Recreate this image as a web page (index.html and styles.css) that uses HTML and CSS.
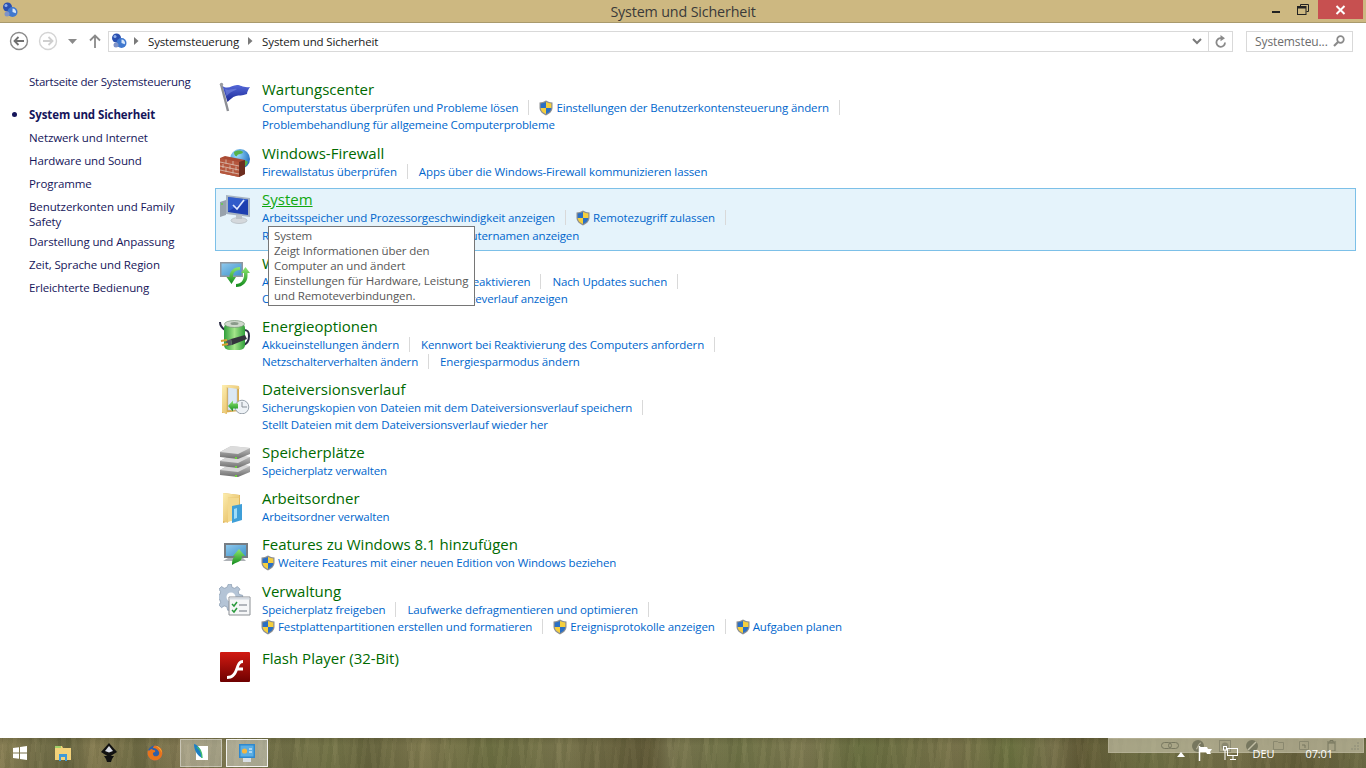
FILE: index.html
```html
<!DOCTYPE html>
<html lang="de">
<head>
<meta charset="utf-8">
<title>System und Sicherheit</title>
<link rel="stylesheet" href="styles.css">
</head>
<body>
<svg class="defs" width="0" height="0" aria-hidden="true">
  <defs>
    <linearGradient id="gBlue" x1="0" y1="0" x2="0" y2="1"><stop offset="0" stop-color="#5468d8"/><stop offset="1" stop-color="#1a2896"/></linearGradient>
    <linearGradient id="gGreen" x1="0" y1="0" x2="1" y2="0"><stop offset="0" stop-color="#2f9e3a"/><stop offset=".5" stop-color="#a4e58a"/><stop offset="1" stop-color="#2f9e3a"/></linearGradient>
    <linearGradient id="gArrow" x1="0" y1="0" x2="0" y2="1"><stop offset="0" stop-color="#8fe870"/><stop offset="1" stop-color="#118a1c"/></linearGradient>
    <linearGradient id="gFolder" x1="0" y1="0" x2="1" y2="1"><stop offset="0" stop-color="#fdeeb0"/><stop offset="1" stop-color="#dfb04f"/></linearGradient>
    <linearGradient id="gRed" x1="0" y1="0" x2="0" y2="1"><stop offset="0" stop-color="#d21a12"/><stop offset="1" stop-color="#6e0000"/></linearGradient>
    <linearGradient id="gScreen" x1="0" y1="0" x2="1" y2="1"><stop offset="0" stop-color="#8ec8ec"/><stop offset="1" stop-color="#3f93cc"/></linearGradient>
    <linearGradient id="gDisk" x1="0" y1="0" x2="0" y2="1"><stop offset="0" stop-color="#c9c9c9"/><stop offset="1" stop-color="#6e6e6e"/></linearGradient>
    <radialGradient id="gGlobe" cx=".35" cy=".3" r=".8"><stop offset="0" stop-color="#9be0ff"/><stop offset="1" stop-color="#1560b8"/></radialGradient>
    <symbol id="shield" viewBox="0 0 16 16">
      <path d="M8 .5C6 1.800 4 2.300 1.500 2.400v5.400c0 3.600 3 6.200 6.500 7.700 3.500-1.500 6.500-4.100 6.500-7.700V2.400C12 2.300 10 1.800 8 .5z" fill="#8d8f91"/>
      <path d="M8 2v6H2.700V3.400C4.800 3.300 6.400 2.900 8 2z" fill="#2a6fc4"/>
      <path d="M8 2v6h5.300V3.400C11.200 3.300 9.600 2.900 8 2z" fill="#f5cf3d"/>
      <path d="M2.700 8H8v6.100C5.300 12.900 2.800 10.800 2.700 8z" fill="#f5cf3d"/>
      <path d="M13.300 8H8v6.100c2.700-1.200 5.200-3.300 5.300-6.100z" fill="#2a6fc4"/>
    </symbol>
    <symbol id="cpl" viewBox="0 0 16 16">
      <circle cx="5.500" cy="5" r="4.500" fill="#2a4fb0"/>
      <circle cx="4" cy="3.500" r="1.500" fill="#8fb0ea"/>
      <circle cx="10.500" cy="10" r="5" fill="#3f78cf"/>
      <path d="M10.500 10V6.500a3.500 3.500 0 0 1 3.300 4.700z" fill="#d6e6fa"/>
      <circle cx="5" cy="12" r="2.500" fill="#7f93c8"/>
    </symbol>
  </defs>
</svg>

<div class="window">
  <header class="titlebar">
    <svg class="title-icon"><use href="#cpl"/></svg>
    <div class="title-text">System und Sicherheit</div>
    <div class="win-controls">
      <span class="win-min"></span>
      <svg class="win-restore" width="12" height="11" viewBox="0 0 12 11"><path d="M3.500 2.500V.5h8v7h-2" fill="none" stroke="#222"/><rect x=".5" y="2.500" width="8.500" height="8" fill="none" stroke="#222" stroke-width="1"/><rect x="1" y="3" width="8" height="1.500" fill="#222"/></svg>
      <span class="win-close"><svg width="11" height="10" viewBox="0 0 11 10"><path d="M1.500 1l8 8M9.500 1l-8 8" stroke="#fff" stroke-width="2"/></svg></span>
    </div>
  </header>

  <nav class="navbar">
    <svg class="nav-round" width="20" height="20" viewBox="0 0 20 20"><circle cx="10" cy="10" r="8.500" fill="#fff" stroke="#8a8a8a" stroke-width="1.400"/><path d="M15 10H6M9.500 6L5.500 10l4 4" fill="none" stroke="#707070" stroke-width="1.800"/></svg>
    <svg class="nav-round nav-fwd" width="20" height="20" viewBox="0 0 20 20"><circle cx="10" cy="10" r="8.500" fill="#fff" stroke="#d4d4d4" stroke-width="1.400"/><path d="M5 10h9M10.500 6l4 4-4 4" fill="none" stroke="#cfcfcf" stroke-width="1.800"/></svg>
    <svg class="nav-drop" width="9" height="5" viewBox="0 0 9 5"><path d="M0 0h9L4.500 5z" fill="#8a8a8a"/></svg>
    <svg class="nav-up" width="12" height="14" viewBox="0 0 12 14"><path d="M6 14V2M1 6.500l5-5 5 5" fill="none" stroke="#8a8a8a" stroke-width="1.800"/></svg>
    <div class="address">
      <svg class="addr-icon"><use href="#cpl"/></svg>
      <svg class="addr-arrow" width="5" height="8" viewBox="0 0 5 8"><path d="M0 0l4.500 4L0 8z" fill="#7a7a7a"/></svg>
      <span class="addr-part">Systemsteuerung</span>
      <svg class="addr-arrow" width="5" height="8" viewBox="0 0 5 8"><path d="M0 0l4.500 4L0 8z" fill="#7a7a7a"/></svg>
      <span class="addr-part">System und Sicherheit</span>
      <svg class="addr-chev" width="10" height="7" viewBox="0 0 10 7"><path d="M1 1l4 4 4-4" fill="none" stroke="#7a7a7a" stroke-width="2"/></svg>
      <span class="addr-refresh"><svg width="12" height="13" viewBox="0 0 12 13"><path d="M10 7.500A4.300 4.300 0 1 1 6 3.200" fill="none" stroke="#8a8a8a" stroke-width="1.800"/><path d="M5.500 0l4.500 3.200-4.500 3z" fill="#8a8a8a"/></svg></span>
    </div>
    <div class="search">
      <span class="search-text">Systemsteu...</span>
      <svg width="12" height="12" viewBox="0 0 12 12"><circle cx="7.500" cy="4.500" r="3.300" fill="none" stroke="#8a8a8a" stroke-width="1.700"/><path d="M5 7l-4 4" stroke="#8a8a8a" stroke-width="2.200"/></svg>
    </div>
  </nav>

  <div class="content">
    <aside class="sidebar">
      <a class="side-home">Startseite der Systemsteuerung</a>
      <a class="side-link side-active">System und Sicherheit</a>
      <a class="side-link">Netzwerk und Internet</a>
      <a class="side-link">Hardware und Sound</a>
      <a class="side-link">Programme</a>
      <a class="side-link side-wrap">Benutzerkonten und Family Safety</a>
      <a class="side-link">Darstellung und Anpassung</a>
      <a class="side-link">Zeit, Sprache und Region</a>
      <a class="side-link">Erleichterte Bedienung</a>
    </aside>

    <main class="list">
      <section class="item item-first">
        <svg class="icon" viewBox="0 0 32 32"><path d="M2 2l7 27" stroke="#8d8f95" stroke-width="2.400"/><circle cx="2.500" cy="2.500" r="1.700" fill="#9a9ca2"/><path d="M3.500 4C9 8 13 3 18 3c4 0 6 3 13 2-2 3-3 5-3 7-5 2-8 1-11 2-4 1-6 4-8.500 6z" fill="url(#gBlue)"/><path d="M6 7c4 2 8-1 12 0-3 2-7 3-10.500 7z" fill="#8292e6" opacity=".5"/></svg>
        <div class="body">
          <h2 class="title">Wartungscenter</h2>
          <div class="links"><a class="link sep">Computerstatus überprüfen und Probleme lösen</a><svg class="shield"><use href="#shield"/></svg><a class="link sep">Einstellungen der Benutzerkontensteuerung ändern</a></div>
          <div class="links"><a class="link">Problembehandlung für allgemeine Computerprobleme</a></div>
        </div>
      </section>

      <section class="item item-one item-pad">
        <svg class="icon" viewBox="0 0 32 32"><circle cx="21" cy="13" r="10" fill="url(#gGlobe)"/><path d="M15 6c3-2 7-2 9 0-1 3-5 1-6 4-2 1-3-2-3-4zM23 15c3-1 5 0 6 1-1 3-3 5-5 5-1-2-2-4-1-6z" fill="#57b24a"/><path d="M1 12l5-2 20 4v14l-6 3L1 27z" fill="#a94a33"/><path d="M1 12l19 4v15L1 27z" fill="#b5573e"/><path d="M20 16l6-2v14l-6 3z" fill="#6d2e20"/><path d="M1 16l19 4M1 20l19 4M1 24l19 4M7 13.500v4M14 15v4M4 18v4M11 19.500v4M17 20.500v4M7 22v4M14 23.500v4" stroke="#dcc3b5" stroke-width=".8" fill="none"/></svg>
        <div class="body">
          <h2 class="title">Windows-Firewall</h2>
          <div class="links"><a class="link sep">Firewallstatus überprüfen</a><a class="link">Apps über die Windows-Firewall kommunizieren lassen</a></div>
        </div>
      </section>

      <section class="item item-hover">
        <svg class="icon" viewBox="0 0 32 32"><path d="M1 9l6-2v15l-6 2z" fill="#98a2ac"/><circle cx="3" cy="11" r="1" fill="#5fd048"/><path d="M7 2l24 3v19L7 21z" fill="#a6b3c1"/><path d="M9 4l20 2.500v15.500L9 19z" fill="#1d3fb0"/><path d="M9 4l20 2.500-20 12z" fill="#3f6fdc" opacity=".6"/><path d="M14 12l4 4 7-9" fill="none" stroke="#dfe9ff" stroke-width="1.700"/><ellipse cx="20" cy="27.500" rx="8" ry="3" fill="#d4d8dc" stroke="#aab0b6" stroke-width=".6"/><path d="M17 22h6v4h-6z" fill="#b9c0c6"/></svg>
        <div class="body">
          <h2 class="title title-hover">System</h2>
          <div class="links"><a class="link sep">Arbeitsspeicher und Prozessorgeschwindigkeit anzeigen</a><svg class="shield"><use href="#shield"/></svg><a class="link sep">Remotezugriff zulassen</a></div>
          <div class="links"><a class="link sep">Remoteunterstützung starten</a><a class="link">Computernamen anzeigen</a></div>
        </div>
        <div class="tooltip">System<br>Zeigt Informationen über den<br>Computer an und ändert<br>Einstellungen für Hardware, Leistung<br>und Remoteverbindungen.</div>
      </section>

      <section class="item">
        <svg class="icon" viewBox="0 0 32 32"><path d="M1 6h23v15H1z" fill="#8f979f"/><path d="M2.500 7.500h20v12h-20z" fill="url(#gScreen)"/><path d="M17 28c5 0 8-4 8-9v-2h-3l4.500-6 4.500 6h-2.500v3c0 6-4.500 11-11.500 11z" fill="url(#gArrow)"/><path d="M21 14c-5 0-7 3-7 7h3l-4.500 7-5-7h3c0-6 4.500-10 10.500-10z" fill="url(#gArrow)"/></svg>
        <div class="body">
          <h2 class="title">Windows Update</h2>
          <div class="links"><a class="link sep">Automatische Updates aktivieren oder deaktivieren</a><a class="link sep">Nach Updates suchen</a></div>
          <div class="links"><a class="link sep">Optionale Updates installieren</a><a class="link">Updateverlauf anzeigen</a></div>
        </div>
      </section>

      <section class="item">
        <svg class="icon" viewBox="0 0 32 32"><path d="M1 3c0 4 2 6 5 8M25 11c4 0 5 2 5 6 0 5-2 8-6 9" fill="none" stroke="#2a2a44" stroke-width="2"/><rect x="5" y="4" width="21" height="27" rx="5" fill="url(#gGreen)"/><ellipse cx="15.500" cy="5" rx="10" ry="3.500" fill="#cfd8cc" stroke="#6a8a6a" stroke-width=".6"/><ellipse cx="15.500" cy="4.500" rx="4" ry="1.500" fill="#8a9a8a"/><path d="M12 20l14-4 2 4-15 6z" fill="#33343c"/><path d="M12 20l1 6-5 1-1-5z" fill="#54555e"/><path d="M2 22l6-1M3 26l6-1" stroke="#d8a035" stroke-width="2"/></svg>
        <div class="body">
          <h2 class="title">Energieoptionen</h2>
          <div class="links"><a class="link sep">Akkueinstellungen ändern</a><a class="link sep">Kennwort bei Reaktivierung des Computers anfordern</a></div>
          <div class="links"><a class="link sep">Netzschalterverhalten ändern</a><a class="link">Energiesparmodus ändern</a></div>
        </div>
      </section>

      <section class="item">
        <svg class="icon" viewBox="0 0 32 32"><path d="M3 3l17 1v25L3 31z" fill="#d9ac4f"/><path d="M3 3l5 3v26L3 30z" fill="url(#gFolder)"/><path d="M9 5l9 1v22H9z" fill="#dbe8f5" stroke="#a9bfd6" stroke-width=".5"/><path d="M3 3c5 0 10 0 17 1l.5 3-13-1.500V32L3 30z" fill="url(#gFolder)"/><circle cx="23" cy="25" r="6.800" fill="#eef2f6" stroke="#99a2ab"/><path d="M23 20v5h5" fill="none" stroke="#888f96" stroke-width="1"/><path d="M9 24l5-5.500v3h5v5h-5v3z" fill="url(#gArrow)"/></svg>
        <div class="body">
          <h2 class="title">Dateiversionsverlauf</h2>
          <div class="links"><a class="link sep">Sicherungskopien von Dateien mit dem Dateiversionsverlauf speichern</a></div>
          <div class="links"><a class="link">Stellt Dateien mit dem Dateiversionsverlauf wieder her</a></div>
        </div>
      </section>

      <section class="item item-one">
        <svg class="icon" viewBox="0 0 32 32"><path d="M1 25l11-6 19 2v6l-12 5-18-2z" fill="url(#gDisk)"/><path d="M1 25l18 2 12-6-19-2z" fill="#d6d6d6"/><path d="M1 16l11-6 19 2v6l-12 5-18-2z" fill="url(#gDisk)"/><path d="M1 16l18 2 12-6-19-2z" fill="#d6d6d6"/><path d="M1 7l11-6 19 2v6l-12 5-18-2z" fill="url(#gDisk)"/><path d="M1 7l18 2 12-6-19-2z" fill="#dcdcdc"/><path d="M17 12v2M17 21v2M17 30v2" stroke="#6fd13d" stroke-width="2"/></svg>
        <div class="body">
          <h2 class="title">Speicherplätze</h2>
          <div class="links"><a class="link">Speicherplatz verwalten</a></div>
        </div>
      </section>

      <section class="item item-one">
        <svg class="icon" viewBox="0 0 32 32"><path d="M4 2l17 2v23L4 32z" fill="#e0b65c"/><path d="M4 2l16 2 .5 3L9 6v26l-5-2z" fill="url(#gFolder)"/><path d="M9 6l11 1v20L9 31z" fill="#f3d98f"/><path d="M13 15l10-2v16l-10 3z" fill="#3f9fd8"/><path d="M15 18l3-1v10l-3 1z" fill="#9fdcf8"/></svg>
        <div class="body">
          <h2 class="title">Arbeitsordner</h2>
          <div class="links"><a class="link">Arbeitsordner verwalten</a></div>
        </div>
      </section>

      <section class="item item-one item-pad">
        <svg class="icon" viewBox="0 0 32 32"><path d="M5 6h24v15H5z" fill="#767d84"/><path d="M7 8h20v11H7z" fill="url(#gScreen)"/><path d="M4 24l5-3h15l3 3z" fill="#8a9097" opacity=".7"/><path d="M13 28c0-5 1-8 4-9h-3l6-7 6 7h-3c0 3-1 5-4 6-2 .5-4 1.500-6 3z" fill="url(#gArrow)"/></svg>
        <div class="body">
          <h2 class="title">Features zu Windows 8.1 hinzufügen</h2>
          <div class="links"><svg class="shield"><use href="#shield"/></svg><a class="link">Weitere Features mit einer neuen Edition von Windows beziehen</a></div>
        </div>
      </section>

      <section class="item item-last">
        <svg class="icon" viewBox="0 0 32 32"><path d="M12 1l3 0 1 4 3 1 3-2 3 3-2 3 1 3 4 1v4l-4 1-1 3 2 3-3 3-3-2-3 1-1 4h-4l-1-4-3-1-3 2-3-3 2-3-1-3-4-1v-4l4-1 1-3-2-3 3-3 3 2 3-1z" transform="translate(-1 -1) scale(.88)" fill="#b4c4d6" stroke="#8497ac" stroke-width=".8"/><circle cx="12" cy="13" r="4.500" fill="#fff"/><path d="M10 13h21v18H10z" fill="#f6f7f8" stroke="#8b8f94"/><path d="M10.500 13.500h20v2h-20z" fill="#d5dbe2"/><path d="M13 20l2 2 3-4M13 26l2 2 3-4" fill="none" stroke="#2a9a3c" stroke-width="1.500"/><path d="M20 21h8M20 27h8" stroke="#6f7780" stroke-width="1.200"/></svg>
        <div class="body">
          <h2 class="title">Verwaltung</h2>
          <div class="links"><a class="link sep">Speicherplatz freigeben</a><a class="link sep">Laufwerke defragmentieren und optimieren</a></div>
          <div class="links"><svg class="shield"><use href="#shield"/></svg><a class="link sep">Festplattenpartitionen erstellen und formatieren</a><svg class="shield"><use href="#shield"/></svg><a class="link sep">Ereignisprotokolle anzeigen</a><svg class="shield"><use href="#shield"/></svg><a class="link">Aufgaben planen</a></div>
        </div>
      </section>

      <section class="item">
        <svg class="icon" viewBox="0 0 32 32"><rect x="1" y="1" width="30" height="30" rx="1" fill="url(#gRed)"/><path d="M8 25c5 0 7-3 9-9 1.500-4 3-7 7-7v3c-2.500 0-3.300 2-4.200 4.500H24v3h-5.300C16.500 25 14 28 8 28z" fill="#fff"/></svg>
        <div class="body">
          <h2 class="title">Flash Player (32-Bit)</h2>
        </div>
      </section>
    </main>
  </div>
</div>

<footer class="taskbar">
  <div class="tb-left">
    <svg class="tb-start" width="14" height="14" viewBox="0 0 14 14"><path d="M0 2l6-.8v5.400H0zM7 1l7-1v6.600H7zM0 7.400h6v5.400l-6-.8zM7 7.400h7V14l-7-1z" fill="#fff"/></svg>
    <span class="tb-btn"><svg width="18" height="16" viewBox="0 0 18 16"><path d="M1 1h7l1 2h8v12H1z" fill="#f3d27a"/><path d="M1 1h6v2H1z" fill="#9ed06a"/><path d="M5 9h8v7h-2v-4H7v4H5z" fill="#3f9ad8"/></svg></span>
    <span class="tb-btn"><svg width="16" height="20" viewBox="0 0 16 20"><path d="M8 0l8 9-8 5-8-5z" fill="#111"/><path d="M8 3l4 5-4 1.500L4 8z" fill="#d9dce4"/><path d="M3 13h10l-2 3-1 3H6l-1-3z" fill="#111"/></svg></span>
    <span class="tb-btn"><svg width="16" height="16" viewBox="0 0 16 16"><circle cx="8" cy="8" r="7.500" fill="#2f5fa8"/><path d="M8 .5a7.500 7.500 0 1 1-6.800 4.400C2 7 3 4 5 4 6 6 9 4 8 7 6 7 5 9 7 11c3 1 6-1 5-4-1-2-3-4-6-4 0-1 1-2.500 2-2.500z" fill="#e8741c"/><path d="M9 1c3 .5 6 3.500 6 7-1-3-3-5-6-7z" fill="#f6b73c"/></svg></span>
    <span class="tb-app"><svg width="14" height="18" viewBox="0 0 14 18"><rect x="2" y="2" width="12" height="14" fill="#fff"/><path d="M0 0c5 1 8 7 8 14C4 12 0 7 0 0z" fill="#1c7fc4"/><path d="M3 3c3 2 5 6 5 11" stroke="#3fbf6a" stroke-width="1.400" fill="none"/></svg></span>
    <span class="tb-app tb-app-on"><svg width="16" height="19" viewBox="0 0 16 19"><rect x="0" y="0" width="16" height="14" fill="#2e88cf"/><rect x="1.500" y="1.500" width="13" height="11" fill="#5aaee4"/><circle cx="5.500" cy="7" r="2.600" fill="#f4b63f"/><path d="M10 5h3M10 8h3" stroke="#fff"/><rect x="4" y="14" width="8" height="4" fill="#d9dfe5"/></svg></span>
  </div>
  <div class="tb-tray">
    <svg class="tray-caret" width="8" height="5" viewBox="0 0 8 5"><path d="M4 0l4 5H0z" fill="#fff"/></svg>
    <svg class="tray-flag" width="15" height="15" viewBox="0 0 15 15"><path d="M1.500 0v15" stroke="#fff" stroke-width="1.500"/><path d="M2 1h7l1 2h4l-2 3 1 2H9L8 6H2z" fill="#fff"/></svg>
    <svg width="16" height="15" viewBox="0 0 16 15"><rect x="5.500" y="2.500" width="10" height="7" fill="none" stroke="#fff"/><path d="M8 13.500h6M11 10v3" stroke="#fff"/><rect x="1.500" y=".5" width="3" height="3.500" fill="none" stroke="#fff"/><path d="M3 4v10" stroke="#fff"/></svg>
    <span class="tray-lang">DEU</span>
    <span class="tray-time">07:01</span>
  </div>
  <div class="toolbar-overlay">
    <svg width="18" height="7" viewBox="0 0 18 7"><rect x=".5" y=".5" width="10" height="6" rx="3" fill="none" stroke="#77775f"/><rect x="7.500" y=".5" width="10" height="6" rx="3" fill="none" stroke="#77775f"/></svg>
    <svg class="ov-flash" width="12" height="12" viewBox="0 0 12 12"><circle cx="6" cy="6" r="6" fill="#77775f"/><path d="M4 9c2 0 2-6 5-6" stroke="#b5b199" fill="none" stroke-width="1.200"/></svg>
    <svg width="12" height="12" viewBox="0 0 12 12"><rect x=".5" y=".5" width="11" height="11" fill="none" stroke="#8a886f"/><circle cx="6" cy="6" r="3.500" fill="#8a886f"/></svg>
    <svg width="12" height="12" viewBox="0 0 12 12"><circle cx="6" cy="6" r="6" fill="#77775f"/><path d="M2 10l8-8" stroke="#c3bfa6" stroke-width="1.500"/></svg>
    <svg width="11" height="9" viewBox="0 0 11 9"><path d="M.5 .5h4l1 1h5v7H.5z" fill="none" stroke="#8a886f"/></svg>
    <svg width="10" height="9" viewBox="0 0 10 9"><path d="M.5 .5h9v8h-9z" fill="none" stroke="#8a886f"/><path d="M3 4h3v3" fill="none" stroke="#77775f"/></svg>
    <svg class="ov-trash" width="9" height="11" viewBox="0 0 9 11"><path d="M1 3h7v8H1zM0 2h9M3 2V.5h3V2" fill="none" stroke="#77775f"/></svg>
    <svg class="ov-grip" width="8" height="8" viewBox="0 0 8 8"><path d="M6 0h2v2H6zM3 3h2v2H3zM6 3h2v2H6zM0 6h2v2H0zM3 6h2v2H3zM6 6h2v2H6z" fill="#99977e"/></svg>
  </div>
</footer>
</body>
</html>
```
FILE: styles.css
```css
* { box-sizing: border-box; }
html, body { margin: 0; height: 100%; }
body {
  width: 1366px;
  height: 768px;
  overflow: hidden;
  display: flex;
  flex-direction: column;
  background: #fff;
  font-family: "Open Sans", "Noto Sans", sans-serif;
  font-size: 11.5px;
  letter-spacing: -0.1px;
}
.defs { position: absolute; }
.window { flex: 1; display: flex; flex-direction: column; min-height: 0; }

/* title bar */
.titlebar {
  height: 23px;
  flex: none;
  display: flex;
  align-items: flex-start;
  position: relative;
  background: #cdb881;
  border-bottom: 1px solid #a99a6d;
}
.title-icon { width: 16px; height: 16px; margin: 2px 0 0 2px; }
.title-text {
  position: absolute;
  left: 0;
  right: 0;
  top: 2px;
  text-align: center;
  font-size: 14.3px;
  line-height: 19px;
  color: #3a3a3a;
  letter-spacing: -0.15px;
}
.win-controls { margin-left: auto; display: flex; align-items: flex-start; padding-right: 3px; }
.win-min { width: 8px; height: 2px; background: #222; margin: 11px 17px 0 0; }
.win-restore { margin: 4px 9px 0 0; }
.win-close {
  width: 45px;
  height: 19px;
  background: #c75050;
  display: flex;
  align-items: center;
  justify-content: center;
}

/* navigation */
.navbar { height: 38px; flex: none; display: flex; align-items: center; padding: 0 13px 0 9px; margin-top: -1px; }
.nav-fwd { margin-left: 9px; }
.nav-drop { margin-left: 10px; }
.nav-up { margin-left: 12px; }
.address {
  margin-left: 7px;
  width: 1125px;
  height: 21px;
  display: flex;
  align-items: center;
  border: 1px solid #d9d9d9;
  padding-left: 2px;
  font-size: 11.5px;
  letter-spacing: -0.15px;
  color: #1a1a1a;
}
.addr-icon { width: 16px; height: 16px; margin-right: -2px; }
.addr-arrow { margin: 0 9px; }
.addr-chev { margin-left: auto; margin-right: 6px; }
.addr-refresh {
  width: 24px;
  height: 19px;
  display: flex;
  align-items: center;
  justify-content: center;
  border-left: 1px solid #d9d9d9;
}
.search {
  margin-left: 13px;
  width: 107px;
  height: 21px;
  display: flex;
  align-items: center;
  justify-content: space-between;
  padding: 0 7px 0 8px;
  border: 1px solid #d9d9d9;
  color: #6d6d6d;
  font-size: 12px;
}

/* main area */
.content { flex: 1; display: flex; min-height: 0; }
.sidebar { width: 215px; flex: none; padding: 14px 0 0 29px; display: flex; flex-direction: column; }
.sidebar a { color: #15155a; line-height: 15px; display: block; width: 170px; }
.side-home { margin-bottom: 18px; white-space: nowrap; letter-spacing: -0.23px; }
.side-link { margin-bottom: 8px; position: relative; white-space: nowrap; }
.side-wrap { white-space: normal; margin-bottom: 5px; }
.side-active { font-weight: 700; }
.side-active::before {
  content: "";
  position: absolute;
  left: -17px;
  top: 5px;
  width: 5px;
  height: 5px;
  border-radius: 50%;
  background: #15155a;
}

.list { flex: 1; padding: 17px 10px 0 0; display: flex; flex-direction: column; }
.item {
  position: relative;
  height: 63px;
  flex: none;
  display: flex;
  padding: 2px 0 0 46px;
  border: 1px solid transparent;
}
.item-first { height: 64px; }
.item-one { height: 46px; }
.item-pad { height: 47px; }
.item-last { height: 67px; }
.item-hover { background: #e5f3fb; border-color: #7cc0e8; padding-top: 1px; }
.item-hover .links + .links { margin-top: 1px; }
.icon { position: absolute; left: 3px; top: 4px; width: 32px; height: 32px; }
.body { display: flex; flex-direction: column; }
.title {
  margin: -1px 0 0;
  font-weight: 400;
  font-size: 15px;
  line-height: 20px;
  color: #006a00;
  letter-spacing: 0;
}
.title-hover { color: #10a810; text-decoration: underline; }
.links { height: 17px; display: flex; align-items: center; }
.link { color: #0066cc; white-space: nowrap; line-height: 17px; letter-spacing: -0.13px; }
.sep { position: relative; margin-right: 22px; }
.sep::after {
  content: "";
  position: absolute;
  right: -11px;
  top: 1px;
  width: 1px;
  height: 15px;
  background: #d9d9d9;
}
.shield { width: 16px; height: 16px; flex: none; margin: 0 2px 0 -2px; }

/* tooltip */
.tooltip {
  position: absolute;
  left: 52px;
  top: 37px;
  width: 207px;
  height: 80px;
  z-index: 5;
  padding: 1px 0 0 5px;
  background: #fff;
  border: 1px solid #767676;
  color: #575757;
  line-height: 15px;
  white-space: nowrap;
}

/* taskbar */
.taskbar {
  height: 30px;
  flex: none;
  position: relative;
  display: flex;
  align-items: center;
  justify-content: space-between;
  background-color: #74714c;
  background-image:
    repeating-linear-gradient(97deg, rgba(40,40,15,.06) 0 3px, rgba(210,195,140,.03) 3px 8px, rgba(60,70,25,.05) 8px 13px, rgba(220,205,150,.04) 13px 17px, rgba(50,50,20,.02) 17px 29px),
    repeating-linear-gradient(84deg, rgba(230,215,165,.03) 0 5px, rgba(40,45,15,.04) 5px 11px, rgba(180,170,110,.02) 11px 23px, rgba(40,40,15,.05) 23px 37px),
    linear-gradient(180deg, rgba(60,58,30,.2) 0, rgba(90,85,50,0) 25%, rgba(50,50,25,.08) 100%),
    linear-gradient(90deg,
      rgba(170,150,100,.4) 0, rgba(120,110,70,.2) 3%, rgba(80,80,45,.35) 5%, rgba(170,150,100,.4) 7%, rgba(100,95,55,.3) 10%, rgba(160,140,100,.4) 13%,
      rgba(110,110,65,.3) 20%, rgba(125,130,75,.4) 24%, rgba(85,85,45,.35) 27%, rgba(150,140,90,.4) 31%, rgba(100,110,55,.4) 36%, rgba(135,130,85,.4) 41%,
      rgba(80,70,40,.55) 47.5%, rgba(135,130,90,.4) 49%, rgba(110,120,70,.5) 54%, rgba(145,140,95,.4) 59%, rgba(95,110,55,.5) 63%, rgba(135,125,80,.4) 70%,
      rgba(100,115,55,.5) 74%, rgba(130,120,80,.4) 77%, rgba(85,75,40,.55) 79%, rgba(110,115,65,.5) 84%, rgba(125,115,75,.4) 90%, rgba(90,80,45,.5) 95%, rgba(105,105,65,.4) 100%);
}
.tb-left { display: flex; align-items: center; height: 100%; padding-left: 13px; }
.tb-start { margin-right: 13px; }
.tb-btn { width: 46px; display: flex; justify-content: center; }
.tb-app {
  width: 42px;
  height: 28px;
  margin-right: 4px;
  display: flex;
  align-items: center;
  justify-content: center;
  background: rgba(255,255,255,.3);
  border: 1px solid rgba(255,255,255,.4);
}
.tb-btn + .tb-app { margin-left: 2px; }
.tb-app-on { background: rgba(255,255,255,.4); border: 1px solid rgba(255,255,255,.85); }
.tb-tray {
  display: flex;
  align-items: center;
  height: 100%;
  color: #fff;
  font-size: 11px;
  padding-right: 33px;
  position: relative;
  z-index: 3;
}
.tray-caret { margin-right: 13px; margin-top: 2px; }
.tray-flag { margin-right: 9px; }
.tray-lang { margin-left: 15px; margin-right: 31px; }
.toolbar-overlay {
  position: absolute;
  left: 1108px;
  top: 0;
  width: 256px;
  height: 15px;
  display: flex;
  align-items: center;
  padding-left: 52px;
  gap: 15px;
  background: rgba(190,186,160,.72);
  border: 1px solid rgba(200,195,170,.4);
  z-index: 2;
}
.ov-flash { margin-left: -2px; }
.ov-trash { margin-left: 3px; }
```
